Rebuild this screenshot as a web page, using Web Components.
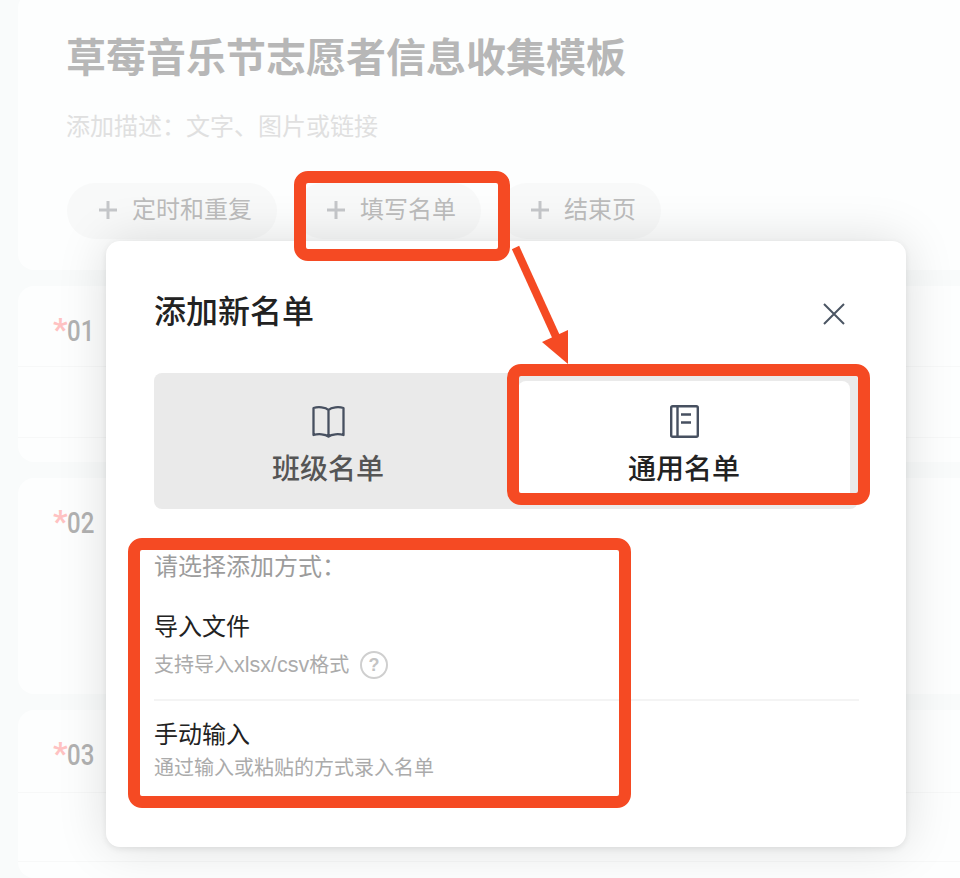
<!DOCTYPE html>
<html lang="zh">
<head>
<meta charset="utf-8">
<title>添加新名单</title>
<style>
  html, body { margin: 0; height: 878px; overflow: hidden; background: #f9fbfb; }
  body { font-family: "Noto Sans CJK SC", "Liberation Sans", sans-serif; position: relative; }
</style>
</head>
<body>
<form-page>
  <form-head title-text="草莓音乐节志愿者信息收集模板" desc="添加描述：文字、图片或链接">
    <add-pill>定时和重复</add-pill>
    <add-pill>填写名单</add-pill>
    <add-pill>结束页</add-pill>
  </form-head>
  <form-question num="01" height="176" lines="80,151"></form-question>
  <form-question num="02" height="216"></form-question>
  <form-question num="03" height="168" lines="82,151"></form-question>
</form-page>

<list-modal heading="添加新名单">
  <list-tab slot="tabs" label="班级名单" icon="book"></list-tab>
  <list-tab slot="tabs" label="通用名单" icon="notebook" active></list-tab>
  <add-method name="导入文件" hint="支持导入xlsx/csv格式" help></add-method>
  <add-method name="手动输入" hint="通过输入或粘贴的方式录入名单"></add-method>
</list-modal>

<mark-box style="left:294px;top:171px;width:216px;height:90px"></mark-box>
<mark-box style="left:507px;top:364px;width:363px;height:141px"></mark-box>
<mark-box style="left:128px;top:538px;width:503px;height:270px"></mark-box>
<mark-arrow></mark-arrow>

<script>
class FormPage extends HTMLElement {
  constructor() {
    super();
    this.attachShadow({ mode: 'open' });
    this.shadowRoot.innerHTML = `
      <style>
        :host { display: flex; flex-direction: column; gap: 16px; padding-left: 18px; }
      </style>
      <slot></slot>`;
  }
}

class FormHead extends HTMLElement {
  constructor() {
    super();
    this.attachShadow({ mode: 'open' });
    this.shadowRoot.innerHTML = `
      <style>
        :host { display: block; background: #fdfefe; border-radius: 16px 0 0 16px; margin-top: -8px; height: 278px; box-sizing: border-box; padding: 35px 0 0 48px; }
        h1 { margin: 0; font-size: 40px; line-height: 56px; font-weight: 700; color: #b7b7b7; white-space: nowrap; }
        p { margin: 22px 0 0; font-size: 24px; line-height: 40px; color: #e0e0e0; }
        .pills { display: flex; gap: 18px; margin-top: 38px; margin-left: 1px; }
      </style>
      <h1 id="t"></h1>
      <p id="d"></p>
      <div class="pills"><slot></slot></div>`;
  }
  connectedCallback() {
    this.shadowRoot.getElementById('t').textContent = this.getAttribute('title-text');
    this.shadowRoot.getElementById('d').textContent = this.getAttribute('desc');
  }
}

class AddPill extends HTMLElement {
  constructor() {
    super();
    this.attachShadow({ mode: 'open' });
    this.shadowRoot.innerHTML = `
      <style>
        :host { display: flex; align-items: center; gap: 15px; height: 56px; padding: 0 25px 0 32px; border-radius: 28px; background: #f8f9f9; color: #bcbcbc; font-size: 24px; line-height: 50px; }
        svg { width: 18px; height: 18px; margin-top: -2px; }
        span { display: block; height: 50px; margin-top: -6px; }
      </style>
      <svg viewBox="0 0 18 18"><path d="M9 0v18M0 9h18" stroke="#c5c7ca" stroke-width="3" fill="none"/></svg>
      <span><slot></slot></span>`;
  }
}

class FormQuestion extends HTMLElement {
  constructor() {
    super();
    this.attachShadow({ mode: 'open' });
    this.shadowRoot.innerHTML = `
      <style>
        :host { display: block; position: relative; background: #fdfefe; border-radius: 16px 0 0 16px; box-sizing: border-box; padding: 27px 0 0 35px; }
        .num { display: flex; align-items: flex-start; font: 500 30px/36px Roboto, sans-serif; color: #b2b2b2; }
        .num b { color: #ffc2c2; font-weight: 700; font-size: 32px; line-height: 32px; width: 14px; }
        .num span { display: inline-block; transform: scaleX(.8); transform-origin: left center; }
        i { position: absolute; left: 0; right: 0; height: 1px; background: #f7f8f8; }
      </style>
      <div class="num"><b>*</b><span id="n"></span></div>`;
  }
  connectedCallback() {
    this.style.height = this.getAttribute('height') + 'px';
    this.shadowRoot.getElementById('n').textContent = this.getAttribute('num');
    (this.getAttribute('lines') || '').split(',').filter(Boolean).forEach(top => {
      const line = document.createElement('i');
      line.style.top = top + 'px';
      this.shadowRoot.appendChild(line);
    });
  }
}

class ListModal extends HTMLElement {
  constructor() {
    super();
    this.attachShadow({ mode: 'open' });
    this.shadowRoot.innerHTML = `
      <style>
        :host { display: block; position: absolute; left: 106px; top: 241px; width: 800px; height: 606px; box-sizing: border-box; padding: 44px 48px 0; background: #fff; border-radius: 14px; box-shadow: 0 2px 6px rgba(0,0,0,.08), 0 0 50px rgba(0,0,0,.13); }
        header { display: flex; justify-content: space-between; align-items: center; height: 48px; }
        h2 { margin: 0; font-size: 32px; line-height: 48px; font-weight: 500; color: #222; }
        header svg { width: 22px; height: 22px; margin: 10px 13px 0 0; }
        .tabs { display: grid; grid-template-columns: 348px 332px; column-gap: 16px; height: 136px; box-sizing: border-box; margin-top: 40px; padding: 8px 8px 8px 0; background: #eaeaea; border-radius: 8px; width: 704px; }
        .ask { margin-top: 38px; font-size: 24px; line-height: 36px; color: #9c9c9c; }
        .methods { margin-top: 24px; width: 705px; }
      </style>
      <header>
        <h2 id="h"></h2>
        <svg viewBox="0 0 22 22"><path d="M1 1l20 20M21 1L1 21" stroke="#4b5563" stroke-width="2" fill="none"/></svg>
      </header>
      <div class="tabs"><slot name="tabs"></slot></div>
      <div class="ask">请选择添加方式：</div>
      <div class="methods"><slot></slot></div>`;
  }
  connectedCallback() {
    this.shadowRoot.getElementById('h').textContent = this.getAttribute('heading');
  }
}

class ListTab extends HTMLElement {
  constructor() {
    super();
    const icons = {
      book: `<svg width="33" height="33" viewBox="0 0 33 33"><path d="M16.500 5C13.500 2 6 1.600 1.500 3v27c4.500-1.400 12-1 15 1.500 3-2.500 10.500-2.900 15-1.500V3C27 1.600 19.500 2 16.500 5zM16.500 5v26" fill="none" stroke="#475060" stroke-width="2.300" stroke-linejoin="round"/></svg>`,
      notebook: `<svg width="29" height="33" viewBox="0 0 29 33"><g fill="none" stroke="#475060" stroke-width="2.400"><rect x="1.200" y="1.200" width="26.600" height="30.600" rx="1.500"/><path d="M7.500 1v31M11 9.500h10M11 17.500h10"/></g></svg>`
    };
    const active = this.hasAttribute('active');
    this.attachShadow({ mode: 'open' });
    this.shadowRoot.innerHTML = `
      <style>
        :host { display: flex; flex-direction: column; align-items: center; border-radius: 8px; box-sizing: border-box; padding-top: ${active ? 24 : 32}px; background: ${active ? '#fff' : 'transparent'}; margin-top: ${active ? 0 : -8}px; }
        svg { display: block; }
        span { margin-top: 9px; font-size: 28px; line-height: 40px; font-weight: 500; color: ${active ? '#222' : '#555'}; }
      </style>
      ${icons[this.getAttribute('icon')]}
      <span>${this.getAttribute('label')}</span>`;
  }
}

class AddMethod extends HTMLElement {
  constructor() {
    super();
    this.attachShadow({ mode: 'open' });
    const help = this.hasAttribute('help');
    const hint = this.getAttribute('hint').replace(/[a-z\/]+/, '<em>$&</em>');
    this.shadowRoot.innerHTML = `
      <style>
        :host { display: block; }
        :host(:not(:last-child)) { border-bottom: 2px solid #f4f4f4; padding-bottom: 20px; margin-bottom: 14px; }
        .name { font-size: 24px; line-height: 36px; color: #222; }
        .hint { display: flex; align-items: center; gap: 11px; margin-top: 3px; font: 20px/28px "Liberation Sans", "Noto Sans CJK SC", sans-serif; color: #ababab; }
        :host(:not(:last-child)) .hint { margin-top: 8px; }
        em { font-style: normal; font-size: 21.5px; }
        svg { width: 28px; height: 28px; }
      </style>
      <div class="name">${this.getAttribute('name')}</div>
      <div class="hint"><div>${hint}</div>${help ? `<svg viewBox="0 0 28 28"><circle cx="14" cy="14" r="13" fill="none" stroke="#cfcfcf" stroke-width="2"/><text x="14" y="20" text-anchor="middle" font-size="18" font-weight="700" font-family="Liberation Sans, sans-serif" fill="#c4c4c4">?</text></svg>` : ''}</div>`;
  }
}

class MarkBox extends HTMLElement {
  constructor() {
    super();
    this.attachShadow({ mode: 'open' });
    this.shadowRoot.innerHTML = `
      <style>
        :host { display: block; position: absolute; box-sizing: border-box; border: 12px solid #f54a23; border-radius: 14px; }
      </style>`;
  }
}

class MarkArrow extends HTMLElement {
  constructor() {
    super();
    this.attachShadow({ mode: 'open' });
    this.shadowRoot.innerHTML = `
      <style>
        :host { display: block; position: absolute; left: 505px; top: 240px; width: 70px; height: 130px; }
        svg { display: block; }
      </style>
      <svg width="70" height="130" viewBox="505 240 70 130">
        <path d="M515.500 247.500L558 341" stroke="#f54a23" stroke-width="8" fill="none"/>
        <path d="M542 342L568 330V364z" fill="#f54a23"/>
      </svg>`;
  }
}

customElements.define('form-page', FormPage);
customElements.define('form-head', FormHead);
customElements.define('add-pill', AddPill);
customElements.define('form-question', FormQuestion);
customElements.define('list-modal', ListModal);
customElements.define('list-tab', ListTab);
customElements.define('add-method', AddMethod);
customElements.define('mark-box', MarkBox);
customElements.define('mark-arrow', MarkArrow);
</script>
</body>
</html>
